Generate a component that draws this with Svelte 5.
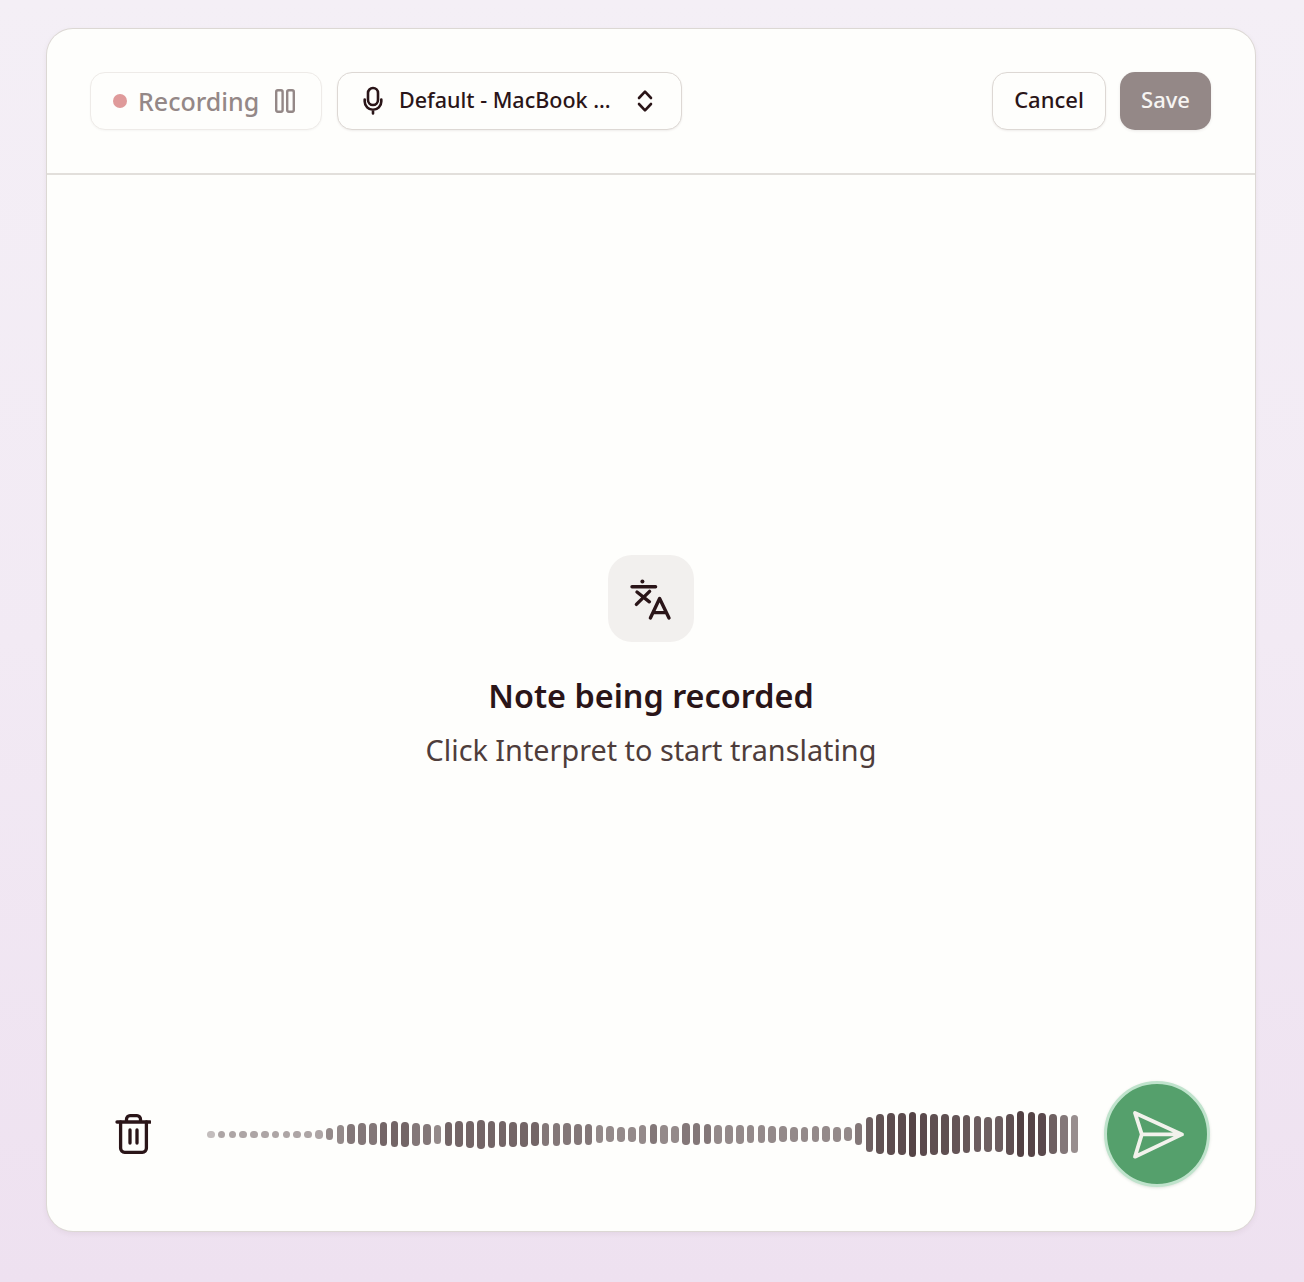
<script>
  const heights = [7,7,7,7,7,7,7,7,7,7,9,12,19,20,22,22,24,26,25,23,21,19,24,26,27,29,27,26,25,25,24,23,23,22,21,21,18,16,15,15,19,20,19,17,22,22,20,19,19,19,18,18,17,16,15,15,16,16,15,14,22,35,40,42,42,45,43,41,41,39,38,36,35,36,41,46,45,43,40,39,38];
  const alpha = (h, i) => {
    if (i === 0) return 0.28;
    if (i >= 80) return 0.48;
    if (i === 79) return 0.58;
    if (i === 78) return 0.68;
    if (h < 10) return 0.38;
    if (h < 20) return 0.5;
    if (h < 24) return 0.58;
    if (h < 32) return 0.66;
    return 0.68 + (h - 35) * 0.012;
  };
  const bars = heights.map((h, i) => ({ h, a: alpha(h, i) }));
</script>

<div class="page">
  <div class="card">
    <header class="top">
      <div class="group">
        <div class="pill rec">
          <span class="dot"></span>
          <span class="rec-label">Recording</span>
          <svg class="pause" width="20" height="24" viewBox="0 0 20 24" fill="none" stroke="#948887" stroke-width="2.4"><rect x="1.2" y="1.3" width="6.4" height="21.4" rx="1.6"/><rect x="12.2" y="1.3" width="6.6" height="21.4" rx="1.6"/></svg>
        </div>
        <div class="pill select">
          <svg class="mic" width="24" height="30" viewBox="0 0 24 30" fill="none" stroke="#2a1518" stroke-width="2.6" stroke-linecap="round"><rect x="7" y="2" width="10" height="17" rx="5"/><path d="M3.7 13.5v2a8.3 8.3 0 0 0 16.6 0v-2M12 24v3.5"/></svg>
          <span class="device">Default - MacBook ...</span>
          <svg class="chev" width="18" height="24" viewBox="0 0 18 24" fill="none" stroke="#2a1518" stroke-width="2.6" stroke-linecap="round" stroke-linejoin="round"><path d="M3 9l6-6.4L15 9M3 15l6 6.4L15 15"/></svg>
        </div>
      </div>
      <div class="group actions">
        <button class="btn cancel"><span>Cancel</span></button>
        <button class="btn save"><span>Save</span></button>
      </div>
    </header>

    <main class="center">
      <div class="badge">
        <svg width="44" height="44" viewBox="629 576 44 44" fill="none" stroke="#2a1518" stroke-width="3.4" stroke-linecap="round" stroke-linejoin="round">
          <circle cx="642.4" cy="580.6" r="2" fill="#2a1518" stroke="none"/>
          <path d="M632 585.8h23.6M637 591l12.4 9.8M649.6 590.4 636.4 603.4"/>
          <path d="M650.4 617 659.6 597.6 669 617M653 611.6h13.5"/>
        </svg>
      </div>
      <h1>Note being recorded</h1>
      <p>Click Interpret to start translating</p>
    </main>

    <footer class="bottom">
      <button class="trash" aria-label="Delete">
        <svg width="36" height="40" viewBox="115 1114 36 40" fill="none" stroke="#2a1518" stroke-width="3.3" stroke-linecap="round" stroke-linejoin="round">
          <path d="M117 1122h33M126.5 1122v-2.8a3.5 3.5 0 0 1 3.5-3.5h7a3.5 3.5 0 0 1 3.5 3.5v2.8"/>
          <path d="M120.6 1122v26.3a4 4 0 0 0 4 4h17.8a4 4 0 0 0 4-4V1122M130 1130v13M137 1130v13"/>
        </svg>
      </button>
      <div class="wave">
        {#each bars as b}
          <span class="bar" style="height:{b.h}px;opacity:{b.a}"></span>
        {/each}
      </div>
      <button class="send" aria-label="Send">
        <svg width="56" height="52" viewBox="1130 1107 56 52" fill="none" stroke="#f2f2ec" stroke-width="3.8" stroke-linecap="round" stroke-linejoin="round">
          <path d="M1183 1133.4 1136 1112l6.8 21.4-6.8 22.3zM1142.8 1133.4H1183"/>
        </svg>
      </button>
    </footer>
  </div>
</div>

<style>
  :global(body) {
    margin: 0;
  }
  .page {
    box-sizing: border-box;
    width: 1304px;
    height: 1282px;
    padding: 29px 49px 51px 47px;
    background: linear-gradient(180deg, #f4eff6 0%, #f2eaf4 50%, #eee1f0 100%);
    font-family: "Noto Sans", sans-serif;
    color: #2a1518;
  }
  .card {
    box-sizing: border-box;
    height: 1202px;
    display: flex;
    flex-direction: column;
    background: #fefefc;
    border-radius: 26px;
    box-shadow: 0 0 0 1px #dcd8d4, 0 2px 6px rgba(60, 40, 50, 0.08);
  }
  .top {
    box-sizing: border-box;
    height: 146px;
    flex: none;
    display: flex;
    justify-content: space-between;
    align-items: flex-start;
    padding: 43px 44px 0 43px;
    border-bottom: 2px solid #e2dfdb;
  }
  .group {
    display: flex;
    gap: 15px;
  }
  .actions {
    gap: 14px;
  }
  .pill {
    box-sizing: border-box;
    height: 58px;
    display: flex;
    align-items: center;
    border-radius: 15px;
    background: #fefefc;
  }
  .rec {
    width: 232px;
    padding-left: 22px;
    border: 1px solid #eeebe8;
    box-shadow: 0 1px 2px rgba(60, 40, 40, 0.04);
  }
  .dot {
    width: 14px;
    height: 14px;
    border-radius: 50%;
    background: #df9a9a;
    flex: none;
  }
  .rec-label {
    margin-left: 11px;
    font-size: 25px;
    font-weight: 500;
    color: #948887;
  }
  .pause {
    margin-left: 16px;
    flex: none;
  }
  .select {
    width: 345px;
    padding-left: 24px;
    border: 1px solid #ddd8d4;
    box-shadow: 0 1px 2px rgba(60, 40, 40, 0.08);
  }
  .mic {
    flex: none;
    margin-left: -1px;
  }
  .device {
    margin-left: 14px;
    margin-bottom: 3px;
    font-size: 21.5px;
    font-weight: 500;
    white-space: nowrap;
  }
  .chev {
    margin-left: 25px;
    flex: none;
  }
  .btn {
    box-sizing: border-box;
    height: 58px;
    border-radius: 15px;
    font-family: inherit;
    font-size: 22px;
    font-weight: 500;
    padding: 0;
  }
  .btn span {
    display: block;
    margin-bottom: 5px;
  }
  .cancel {
    width: 114px;
    background: #fefefc;
    color: #2a1518;
    border: 1px solid #ddd8d4;
    box-shadow: 0 1px 2px rgba(60, 40, 40, 0.08);
  }
  .save {
    width: 91px;
    background: #948887;
    color: #f7f5f3;
    border: none;
    box-shadow: 0 1px 3px rgba(60, 40, 40, 0.1);
  }
  .center {
    flex: 1;
    display: flex;
    flex-direction: column;
    align-items: center;
    padding-top: 380px;
  }
  .badge {
    width: 86px;
    height: 87px;
    border-radius: 24px;
    background: #f2f0ee;
    display: flex;
    align-items: center;
    justify-content: center;
  }
  h1 {
    margin: 29px 0 0;
    font-size: 32.4px;
    line-height: 48px;
    font-weight: 600;
  }
  p {
    margin: 9px 0 0;
    font-size: 28.8px;
    line-height: 44px;
    color: #4e3d3b;
  }
  .bottom {
    flex: none;
    display: flex;
    align-items: center;
    height: 105px;
    margin-bottom: 45px;
    padding: 0 45px 0 68px;
  }
  .trash {
    width: 36px;
    height: 40px;
    padding: 0;
    background: none;
    border: none;
    flex: none;
    display: flex;
  }
  .wave {
    margin-left: 56px;
    width: 872.4px;
    flex: none;
    display: flex;
    justify-content: space-between;
    align-items: center;
    padding-top: 1px;
  }
  .bar {
    width: 7.6px;
    border-radius: 3.8px;
    background: #2a1518;
    flex: none;
  }
  .send {
    margin-left: 24.6px;
    box-sizing: border-box;
    width: 106px;
    height: 106px;
    flex: none;
    padding: 0;
    border-radius: 50%;
    background: #55a06c;
    border: 3px solid #bfe3cc;
    display: flex;
    align-items: center;
    justify-content: center;
    box-shadow: 0 1px 3px rgba(40, 80, 50, 0.15);
  }
</style>
